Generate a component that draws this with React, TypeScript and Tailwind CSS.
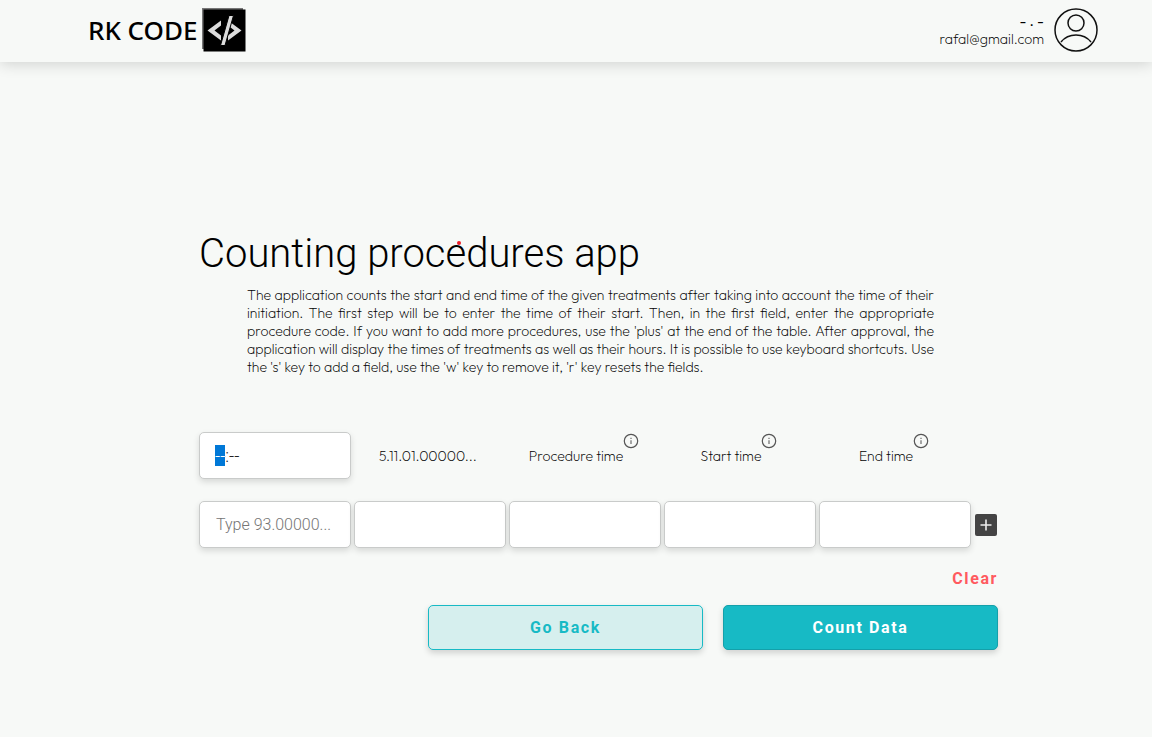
import { useEffect, useRef, useState } from "react";

const outfit = "font-['Outfit','Lato',sans-serif] font-extralight";
const field =
  "h-[47px] w-full min-w-0 rounded-[5px] border border-[#c9cbca] bg-white shadow-[0_3px_6px_rgba(0,0,0,0.13)] outline-none";

function Logo() {
  return (
    <a href="#" className="flex items-center gap-1 text-black" aria-label="RK CODE">
      <span className="font-['Noto_Sans',sans-serif] text-[26px] leading-none font-medium">RK CODE</span>
      <svg width="44" height="44" viewBox="0 0 44 44" aria-hidden="true">
        <path d="M0 0H41V3H2V41H0Z" fill="#777" />
        <rect x="1.500" y="1.500" width="42" height="42" fill="#000" />
        <path d="M19 12.500 5.500 22.500 19 32.500V27.500L12.500 22.500 19 17.500Z" fill="#ddd" />
        <path d="M26 12.500 39.500 22.500 26 32.500V27.500L32.500 22.500 26 17.500Z" fill="#ddd" />
        <path d="M27 7.500H31.500L23 37.500H18.500Z" fill="#ddd" stroke="#000" strokeWidth="1" />
      </svg>
    </a>
  );
}

function Avatar() {
  return (
    <svg width="44" height="44" viewBox="0 0 44 44" fill="none" stroke="#111" strokeWidth="1.500" aria-hidden="true">
      <circle cx="22" cy="22" r="21" />
      <circle cx="22" cy="15" r="8" />
      <path d="M7 34C11 29 16 27 22 27S33 29 37 34" />
    </svg>
  );
}

function InfoIcon() {
  return (
    <svg className="mb-[30px] shrink-0" width="16" height="16" viewBox="0 0 16 16" fill="none" aria-hidden="true">
      <circle cx="8" cy="8" r="6.700" stroke="#555" strokeWidth="1.200" />
      <path d="M8 7.200V11M8 4.800V6" stroke="#777" strokeWidth="1.300" />
    </svg>
  );
}

function Heading({ text }: { text: string }) {
  return (
    <div className="flex items-center justify-center pr-0.5">
      <span className={`${outfit} text-[14px] leading-[18px] text-black`}>{text}</span>
      <InfoIcon />
    </div>
  );
}

export default function App() {
  const timeRef = useRef<HTMLInputElement>(null);
  const [time, setTime] = useState("--:--");

  useEffect(() => {
    timeRef.current?.focus();
    timeRef.current?.setSelectionRange(0, 2);
  }, []);

  return (
    <div className="min-h-screen bg-[#f7f9f7] font-['Roboto',sans-serif]">
      <header className="flex h-[62px] items-center justify-between pr-[54px] pb-0.5 pl-[88px] shadow-[0_2px_14px_rgba(0,0,0,0.16)]">
        <Logo />
        <div className="flex items-center gap-2.5">
          <div className={`${outfit} text-right text-[14px] leading-[18px] text-black`}>
            <div className="text-[15px] font-normal text-black">- . -</div>
            <div>rafal@gmail.com</div>
          </div>
          <Avatar />
        </div>
      </header>

      <main className="pt-[167px] pb-16 pl-[45px]">
        <div className="mx-auto w-full max-w-[799px]">
          <div className="relative">
            <h1 className="text-[40px] leading-[50px] font-light text-black">Counting procedures app</h1>
            <span className="absolute top-3 left-[258px] size-1 rounded-full bg-[#ee1c25]" />
          </div>
          <p className={`${outfit} mt-[7px] pr-16 pl-12 text-justify text-[14px] leading-[18px] text-black`}>
            The application counts the start and end time of the given treatments after taking into account the time of
            their initiation. The first step will be to enter the time of their start. Then, in the first field, enter
            the appropriate procedure code. If you want to add more procedures, use the 'plus' at the end of the table.
            After approval, the application will display the times of treatments as well as their hours. It is possible
            to use keyboard shortcuts. Use the 's' key to add a field, use the 'w' key to remove it, 'r' key resets the
            fields.
          </p>

          <form className="mt-14" onSubmit={(e) => e.preventDefault()}>
            <div className="grid grid-cols-[repeat(5,1fr)_24px] items-center gap-x-[3px] gap-y-[22px]">
              <input
                ref={timeRef}
                aria-label="Time of start"
                value={time}
                onChange={(e) => setTime(e.target.value)}
                className={`${field} px-[15px] text-[18px] font-light text-[#222] selection:bg-[#0078d7] selection:text-white`}
              />
              <div className={`${outfit} pr-1 text-center text-[14px] leading-[18px] text-black`}>5.11.01.00000...</div>
              <Heading text="Procedure time" />
              <Heading text="Start time" />
              <Heading text="End time" />
              <span />
              <input
                aria-label="Procedure code"
                placeholder="Type 93.00000..."
                className={`${field} px-4 text-[16px] font-light placeholder:text-[#757575]`}
              />
              <input aria-label="Procedure name" className={`${field} px-4`} />
              <input aria-label="Procedure time" className={`${field} px-4`} />
              <input aria-label="Start time" className={`${field} px-4`} />
              <input aria-label="End time" className={`${field} px-4`} />
              <button type="button" aria-label="Add procedure" className="flex justify-center">
                <svg width="22" height="22" viewBox="0 0 22 22" aria-hidden="true">
                  <rect width="22" height="22" rx="2" fill="#444" />
                  <path d="M11 5.500V16.500M5.500 11H16.500" stroke="#eee" strokeWidth="1.600" />
                </svg>
              </button>
            </div>
            <div className="mt-[19px] flex justify-end">
              <button type="reset" className="text-[16px] leading-6 font-bold tracking-widest text-[#ff5a5f]">
                Clear
              </button>
            </div>
            <div className="mt-3.5 flex justify-end gap-5">
              <button
                type="button"
                className="h-[45px] w-[275px] rounded-[5px] border border-[#17bac5] bg-[#d6efee] text-[16px] font-bold tracking-widest text-[#17bac5] shadow-[0_3px_6px_rgba(0,0,0,0.16)]"
              >
                Go Back
              </button>
              <button
                type="submit"
                className="h-[45px] w-[275px] rounded-[5px] border border-[#14a0aa] bg-[#17bac5] text-[16px] font-bold tracking-widest text-white shadow-[0_3px_6px_rgba(0,0,0,0.16)]"
              >
                Count Data
              </button>
            </div>
          </form>
        </div>
      </main>
    </div>
  );
}
